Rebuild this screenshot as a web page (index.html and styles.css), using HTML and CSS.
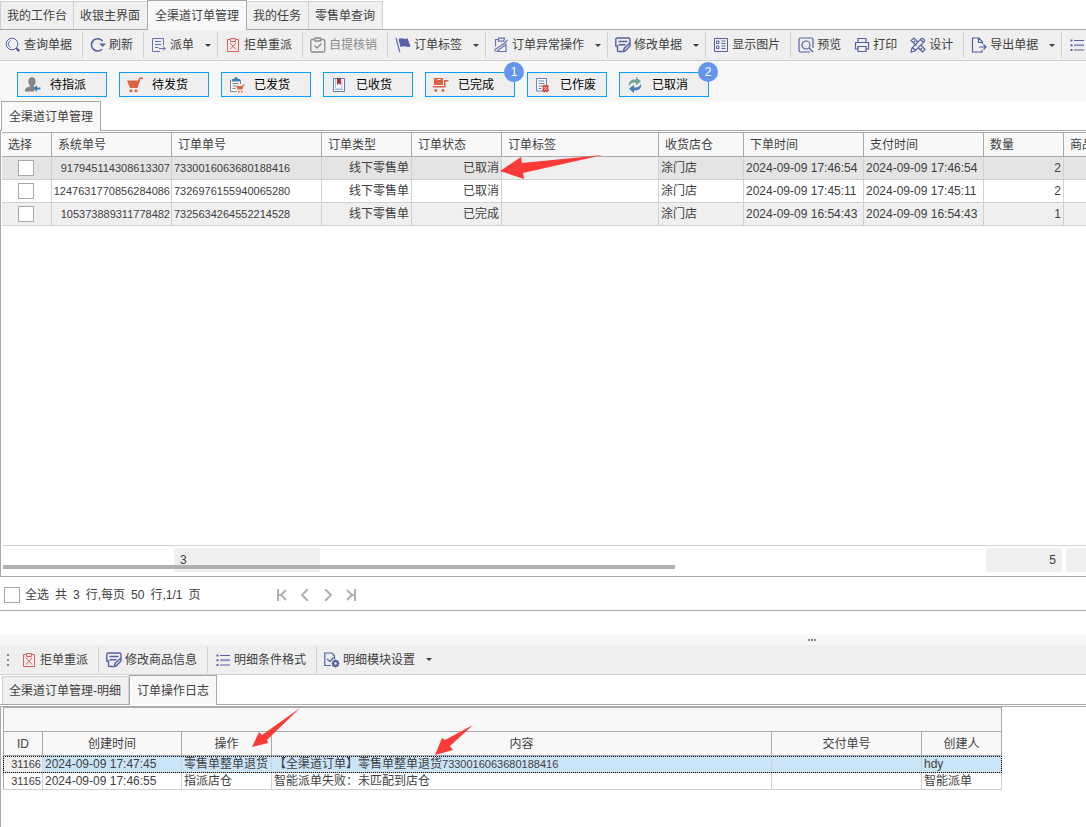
FILE: index.html
```html
<!DOCTYPE html>
<html lang="zh-CN">
<head>
<meta charset="utf-8">
<title>全渠道订单管理</title>
<link rel="stylesheet" href="styles.css">
</head>
<body>
<svg class="sprite" aria-hidden="true">
  <symbol id="i-search" viewBox="0 0 16 16"><g fill="none" stroke="#5b66a8"><circle cx="7" cy="7" r="5.8"/><path d="M5.600 10.500A3.800 3.800 0 0 1 5.600 3.500" stroke-width=".9"/><path d="M11.200 11.200l3 3" stroke-width="2.400"/></g></symbol>
  <symbol id="i-refresh" viewBox="0 0 16 16"><path d="M12.500 4A6.200 6.200 0 1 0 12 12.300" fill="none" stroke="#4c5799" stroke-width="1.500"/><path d="M9 6.500h7L12.800 10z" fill="#5b66a8"/></symbol>
  <symbol id="i-send" viewBox="0 0 16 16"><g fill="none" stroke="#6973b2"><path d="M12.500 8V1.500h-11v13H9"/><path d="M4 4.500h6M4 7.500h6M4 10.500h3.500M8 11.500h6M12 9.500l2.500 2-2.500 2"/></g></symbol>
  <symbol id="i-reject" viewBox="0 0 16 16"><g fill="none" stroke="#dc6258"><path d="M5 2.500H2.500v12h11v-12H11"/><path d="M5.500 1.500h5v3h-5z"/><path d="M5 6l6 6.500M11 6l-6 6.500"/></g></symbol>
  <symbol id="i-verify" viewBox="0 0 16 16"><g fill="none" stroke="#8b8b8b" stroke-width="1.300"><path d="M4.500 2.500H2A1.500 1.500 0 0 0 .8 4v9.500a1.500 1.500 0 0 0 1.500 1.500h11a1.500 1.500 0 0 0 1.500-1.500V4a1.500 1.500 0 0 0-1.500-1.500h-2"/><path d="M5 1h5.500v3H5zM4.500 8.500l2.500 2.500 4.500-4.500"/></g></symbol>
  <symbol id="i-flag" viewBox="0 0 16 16"><path d="M1 .8l3.800 14.400" stroke="#5b66a8" stroke-width="1.200"/><path d="M3.500 2c3.500-2 5.500 1.200 9-.8l3 8.300c-4.500 1.500-5.500-1.500-10 .5z" fill="#5661a3"/></symbol>
  <symbol id="i-abnormal" viewBox="0 0 16 16"><g fill="none" stroke="#6973b2" stroke-width="1.200"><path d="M5 2.500H2.500v7M13 6.500v8H3.500M5.500 1.200h6l-.8 3H5.500zM14.500 3L11 6.500 2 12.500v2M13.500 7l-10 7.500"/></g></symbol>
  <symbol id="i-edit" viewBox="0 0 16 16"><g fill="none" stroke="#5661a3" stroke-width="1.400"><path d="M7 14.500H3.500c-.8 0-1-.5-1-1V9H.8V2.500C.8 1.500 1.300 1 2.200 1h11.300c1 0 1.500.5 1.500 1.500V6M3.500 4.500h9M3.500 7.800h7M8 14.500l1.500-3.500L15 6v3l-5 5z"/></g></symbol>
  <symbol id="i-form" viewBox="0 0 16 16"><g fill="none" stroke="#5661a3"><path d="M1.500 1.500h13v13h-13z"/><path d="M3.500 4h2.500v2.500H3.500zM3.500 9h2.500v2.500H3.500zM8.500 4h4M8.500 6.500h4M8.500 9h4M8.500 11.500h4"/></g></symbol>
  <symbol id="i-preview" viewBox="0 0 16 16"><g fill="none" stroke="#5661a3" stroke-width="1.200"><path d="M15 11V2.500A1.500 1.500 0 0 0 13.500 1h-11A1.500 1.500 0 0 0 1 2.500v11A1.500 1.500 0 0 0 2.500 15H12"/><circle cx="8" cy="8" r="4"/><path d="M11 11l4 4"/></g></symbol>
  <symbol id="i-print" viewBox="0 0 16 16"><g fill="none" stroke="#5661a3" stroke-width="1.200"><path d="M4 5V1.500h8V5M4 12H1.500V5.500h13V12H12M4 9.500h8v5H4z"/></g></symbol>
  <symbol id="i-design" viewBox="0 0 16 16"><g fill="none" stroke="#5661a3" stroke-width="1.200"><path d="M6.500 8.500L1 3.500 4 1l4 4.500M11 8l4 4.500-2.500 2.500L8.500 11M3.500 5.500L5 4M10.500 12.500L12 11"/><path d="M1 15l1-4L11 1.800c1.500-1.500 4.500 1 3.200 2.800L5 14zM2.500 10.500l3 3M10.500 2.500l3 3"/></g></symbol>
  <symbol id="i-export" viewBox="0 0 16 16"><g fill="none" stroke="#5661a3" stroke-width="1.200"><path d="M11.500 7V5L8 1H1.500v14h9.500v-2M7.500 1v4.500h4M8 10h6.500M12.500 7.500L15 10l-2.500 2.500"/></g></symbol>
  <symbol id="i-list" viewBox="0 0 16 16"><path d="M5 3.500h10M5 13h10" stroke="#5661a3" stroke-width="1.200"/><path d="M5 8.200h10" stroke="#8c94c6" stroke-width="2"/><path d="M1.500 2.500h2v2h-2zM1.500 7.200h2v2h-2zM1.500 12h2v2h-2z" fill="#5661a3"/></symbol>
  <symbol id="i-module" viewBox="0 0 16 16"><g fill="none" stroke="#5661a3" stroke-width="1.200"><path d="M7 13.500H.8V1H8L10.500 4V7M3 7l3 2.500L9.500 5.500"/><circle cx="11.500" cy="11.500" r="2.600" stroke-width="1.800"/><path d="M11.500 7.500v8M7.500 11.500h8M8.700 8.700l5.600 5.600M14.300 8.700l-5.600 5.600"/></g><circle cx="11.500" cy="11.500" r="1.200" fill="#efefef"/></symbol>

  <symbol id="s-assign" viewBox="0 0 16 16"><ellipse cx="7" cy="4.600" rx="3.600" ry="4.400" fill="#858585"/><path d="M5 7h4v2.500l1 .5-1 4.500H0c0-3.500 1.500-4.200 5-5z" fill="#858585"/><path d="M8.500 11.500l3.500-3.500v2.500h3.500v2H12V15z" fill="#3a7fbe"/></symbol>
  <symbol id="s-cart" viewBox="0 0 16 16"><path d="M0 3.500h11L12.500.5H16V2h-2.500l-3 9H3z" fill="#dc6243"/><circle cx="4" cy="13.800" r="1.500" fill="#dc6243"/><circle cx="9" cy="13.800" r="1.500" fill="#dc6243"/></symbol>
  <symbol id="s-shipped" viewBox="0 0 16 16"><path d="M2.500 3h9v4M7.500 14.500h-6V3" fill="#fff" stroke="#858585"/><path d="M3 2h2c.3-2.500 3.700-2.500 4 0h2v2.500H3z" fill="#3a7fbe"/><path d="M3.500 6.500h6M3.500 9h4M3.500 11.500h3" stroke="#858585"/><path d="M7.500 9h5.500l.8-1.500H15.500v1h-1l-1.200 4H8.500z" fill="#dc6243"/><path d="M9 14h1.500v1.500H9zM12 14h1.500v1.500H12z" fill="#dc6243"/></symbol>
  <symbol id="s-book" viewBox="0 0 16 16"><path d="M2.500 1.500h11v13h-11z" fill="#fff" stroke="#557fb5"/><path d="M4.500 2v9M11 3v8" stroke="#a6bddb"/><path d="M6 1h4v7L8 6.500 6 8z" fill="#b82c3c"/><path d="M4 11.500h8v1.500H4z" fill="#9eb5d2"/></symbol>
  <symbol id="s-done" viewBox="0 0 16 16"><path d="M1 1h9v7H1zM11 3h4.500v1.500h-3v6H0V9h11z" fill="#dc6243"/><path d="M4.500 2h3v1h-3z" fill="#fff"/><circle cx="2.800" cy="13.500" r="1.400" fill="#dc6243"/><circle cx="10" cy="13.500" r="1.400" fill="#dc6243"/></symbol>
  <symbol id="s-void" viewBox="0 0 16 16"><path d="M1.500 1.500h10V14h-10z" fill="#fff" stroke="#6783b8"/><path d="M3.500 4h6M3.500 6.500h6M3.500 9h4M3.500 11.500h3" stroke="#6783b8"/><path d="M7 9l2-1.500 1.500 1L12 7.500 14 9l-1 2 1 2.500-2 2-1.500-1-1.500 1-2-2 1-2.500z" fill="#d54b3e"/><path d="M9 9.800l3 3.400M12 9.800l-3 3.400" stroke="#f6c5bf"/></symbol>
  <symbol id="s-cancel" viewBox="0 0 16 16"><path d="M1.800 9C1.300 4.500 5 1.800 9 2.800V0l5 4.300-5 4V5.800C6 4.800 4 6 1.800 9z" fill="#6fa592"/><path d="M14.200 7c.5 4.500-3.200 7.200-7.200 6.200V16l-5-4.300 5-4v2.500c3 1 5-.2 7.200-3.200z" fill="#4a7fb8"/></symbol>
</svg>

<nav class="tabs top-tabs" aria-label="页面">
  <button class="tab">我的工作台</button>
  <button class="tab">收银主界面</button>
  <button class="tab active">全渠道订单管理</button>
  <button class="tab">我的任务</button>
  <button class="tab">零售单查询</button>
</nav>

<div class="toolbar" role="toolbar" aria-label="订单操作">
  <button class="tool first"><svg class="icon"><use href="#i-search"/></svg>查询单据</button>
  <button class="tool"><svg class="icon"><use href="#i-refresh"/></svg>刷新</button>
  <button class="tool drop"><svg class="icon"><use href="#i-send"/></svg>派单</button>
  <button class="tool"><svg class="icon"><use href="#i-reject"/></svg>拒单重派</button>
  <button class="tool" disabled><svg class="icon"><use href="#i-verify"/></svg>自提核销</button>
  <button class="tool drop"><svg class="icon"><use href="#i-flag"/></svg>订单标签</button>
  <button class="tool drop"><svg class="icon"><use href="#i-abnormal"/></svg>订单异常操作</button>
  <button class="tool drop"><svg class="icon"><use href="#i-edit"/></svg>修改单据</button>
  <button class="tool"><svg class="icon"><use href="#i-form"/></svg>显示图片</button>
  <button class="tool"><svg class="icon"><use href="#i-preview"/></svg>预览</button>
  <button class="tool joined"><svg class="icon"><use href="#i-print"/></svg>打印</button>
  <button class="tool joined"><svg class="icon"><use href="#i-design"/></svg>设计</button>
  <button class="tool drop"><svg class="icon"><use href="#i-export"/></svg>导出单据</button>
  <button class="tool" aria-label="条件格式"><svg class="icon"><use href="#i-list"/></svg></button>
</div>

<div class="statuses">
  <button class="status"><svg class="icon"><use href="#s-assign"/></svg>待指派</button>
  <button class="status"><svg class="icon"><use href="#s-cart"/></svg>待发货</button>
  <button class="status"><svg class="icon"><use href="#s-shipped"/></svg>已发货</button>
  <button class="status"><svg class="icon"><use href="#s-book"/></svg>已收货</button>
  <button class="status"><svg class="icon"><use href="#s-done"/></svg>已完成<span class="badge">1</span></button>
  <button class="status narrow"><svg class="icon"><use href="#s-void"/></svg>已作废</button>
  <button class="status"><svg class="icon"><use href="#s-cancel"/></svg>已取消<span class="badge">2</span></button>
</div>

<div class="tabs grid-tabs">
  <button class="tab active">全渠道订单管理</button>
</div>

<main class="grid-panel">
  <table class="orders">
    <colgroup><col class="w-check"><col class="w-time"><col class="w-order"><col class="w-type"><col class="w-type"><col class="w-tag"><col class="w-store"><col class="w-time"><col class="w-time"><col class="w-qty"><col class="w-qty"></colgroup>
    <thead>
      <tr><th>选择</th><th>系统单号</th><th>订单单号</th><th>订单类型</th><th>订单状态</th><th>订单标签</th><th>收货店仓</th><th>下单时间</th><th>支付时间</th><th>数量</th><th>商品</th></tr>
    </thead>
    <tbody>
      <tr class="current"><td class="pick"><input type="checkbox" aria-label="选择 917945114308613307"></td><td class="num id">917945114308613307</td><td class="id">7330016063680188416</td><td class="num">线下零售单</td><td class="num">已取消</td><td class="tag"></td><td>涂门店</td><td>2024-09-09 17:46:54</td><td>2024-09-09 17:46:54</td><td class="num">2</td><td></td></tr>
      <tr><td class="pick"><input type="checkbox" aria-label="选择 1247631770856284086"></td><td class="num id">1247631770856284086</td><td class="id">7326976155940065280</td><td class="num">线下零售单</td><td class="num">已取消</td><td></td><td>涂门店</td><td>2024-09-09 17:45:11</td><td>2024-09-09 17:45:11</td><td class="num">2</td><td></td></tr>
      <tr class="odd"><td class="pick"><input type="checkbox" aria-label="选择 105373889311778482"></td><td class="num id">105373889311778482</td><td class="id">7325634264552214528</td><td class="num">线下零售单</td><td class="num">已完成</td><td></td><td>涂门店</td><td>2024-09-09 16:54:43</td><td>2024-09-09 16:54:43</td><td class="num">1</td><td></td></tr>
    </tbody>
  </table>
  <div class="summary">
    <span class="sum count">3</span>
    <span class="sum total">5</span>
    <span class="sum rest"></span>
    <div class="scroll-thumb"></div>
  </div>
  <svg class="pointer pointer-status" viewBox="0 0 104 26" aria-hidden="true"><path d="M0 17L21 3l1 6L103 1 23 19l1 6z"/></svg>
</main>

<div class="pager">
  <label class="pager-all"><input type="checkbox"><span>全选</span></label>
  <span>共</span><span>3</span><span>行,每页</span><span>50</span><span>行,1/1</span><span>页</span>
  <div class="pager-nav">
    <button aria-label="首页"><svg viewBox="0 0 12 12"><path d="M2 0v12M10 1L5 6l5 5M3 6h2"/></svg></button>
    <button aria-label="上一页"><svg viewBox="0 0 12 12"><path d="M9 0L3 6l6 6"/></svg></button>
    <button aria-label="下一页"><svg viewBox="0 0 12 12"><path d="M3 0l6 6-6 6"/></svg></button>
    <button aria-label="末页"><svg viewBox="0 0 12 12"><path d="M10 0v12M2 1l5 5-5 5M9 6H7"/></svg></button>
  </div>
</div>

<section class="detail">
  <div class="splitter"><i></i><i></i><i></i></div>
  <div class="toolbar" role="toolbar" aria-label="明细操作">
    <span class="grip"><i></i><i></i><i></i></span>
    <button class="tool joined"><svg class="icon"><use href="#i-reject"/></svg>拒单重派</button>
    <button class="tool"><svg class="icon"><use href="#i-edit"/></svg>修改商品信息</button>
    <button class="tool"><svg class="icon"><use href="#i-list"/></svg>明细条件格式</button>
    <button class="tool drop"><svg class="icon"><use href="#i-module"/></svg>明细模块设置</button>
  </div>
  <div class="tabs detail-tabs">
    <button class="tab">全渠道订单管理-明细</button>
    <button class="tab active">订单操作日志</button>
  </div>
  <div class="log-panel">
    <table class="log">
      <colgroup><col class="w-id"><col class="w-created"><col class="w-type"><col class="w-content"><col class="w-order"><col class="w-qty"></colgroup>
      <thead>
        <tr><td class="band" colspan="6"></td></tr>
        <tr><th>ID</th><th>创建时间</th><th>操作</th><th>内容</th><th>交付单号</th><th>创建人</th></tr>
      </thead>
      <tbody>
        <tr class="selected"><td class="num id">31166</td><td>2024-09-09 17:47:45</td><td>零售单整单退货</td><td>【全渠道订单】零售单整单退货<span class="id">7330016063680188416</span></td><td></td><td>hdy</td></tr>
        <tr><td class="num id">31165</td><td>2024-09-09 17:46:55</td><td>指派店仓</td><td>智能派单失败：未匹配到店仓</td><td></td><td>智能派单</td></tr>
      </tbody>
    </table>
    <svg class="pointer pointer-action" viewBox="0 0 50 40" aria-hidden="true"><path d="M0 39L7 24l3 3L48 0 15 32l1 3z"/></svg>
    <svg class="pointer pointer-content" viewBox="0 0 40 32" aria-hidden="true"><path d="M0 30L7 13l3 2L38 0 15 21l3 4z"/></svg>
  </div>
</section>
</body>
</html>
```
FILE: styles.css
```css
* { box-sizing: border-box; }

body {
  margin: 0;
  min-height: 100vh;
  display: flex;
  flex-direction: column;
  overflow-x: hidden;
  background: #fff;
  color: #404040;
  font: 12px/16px "Liberation Sans", "Noto Sans CJK SC", sans-serif;
}

button {
  margin: 0;
  padding: 0;
  border: 0;
  background: none;
  color: inherit;
  font: inherit;
  white-space: nowrap;
}

input[type="checkbox"] {
  appearance: none;
  display: block;
  flex: none;
  width: 16px;
  height: 16px;
  margin: 0;
  border: 1px solid #a9a9a9;
  background: #fff;
}

.sprite { position: absolute; width: 0; height: 0; }
.icon { flex: none; width: 16px; height: 16px; }

/* Tabs */
.tabs {
  display: flex;
  flex: none;
  align-items: flex-end;
  height: 30px;
  border-bottom: 1px solid #a9a9a9;
}
.tab {
  height: 28px;
  padding: 0 7px 0 6px;
  border: 1px solid #d0d0d0;
  border-width: 1px 1px 0 0;
  background: #f0f0f0;
}
.tab:first-child { padding: 0 6px; border-left-width: 1px; }
.tab.active {
  height: 30px;
  margin-bottom: -1px;
  padding: 0 7px;
  border-color: #a9a9a9;
  border-left-width: 1px;
  background: #f8f8f8;
}
.top-tabs .active { margin-left: -1px; }
.grid-tabs { padding-left: 1px; }
.detail-tabs { padding-left: 2px; }
.detail-tabs .tab:first-child { padding: 0 7px 0 6px; }

/* Toolbars */
.toolbar {
  display: flex;
  flex: none;
  align-items: center;
  height: 31px;
  border-bottom: 1px solid #d0d0d0;
  background: #efefef;
  overflow: hidden;
}
.tool {
  display: flex;
  flex: none;
  align-items: center;
  gap: 3px;
  height: 26px;
  padding: 0 10px 0 7px;
  border-left: 1px solid #d0d0d0;
}
.tool.first { padding-left: 5px; border-left: 0; }
.tool.joined { padding-left: 3px; border-left: 0; }
.tool:disabled { color: #8b8b8b; }
.tool.drop { padding-right: 6px; }
.tool.drop::after {
  content: "";
  margin-left: 8px;
  border: 3px solid transparent;
  border-top-color: #404040;
  border-bottom-width: 0;
}

/* Status filters */
.statuses {
  display: flex;
  flex: none;
  gap: 12px;
  padding: 11px 0 4px 17px;
  background: #f7f7f7;
}
.status {
  position: relative;
  display: flex;
  align-items: center;
  gap: 9px;
  width: 90px;
  height: 25px;
  padding: 0 7px;
  border: 1px solid #0aa0f5;
  background: #efefef;
  color: #000;
}
.status.narrow { width: 80px; }
.badge {
  position: absolute;
  top: -11px;
  right: -10px;
  width: 20px;
  height: 20px;
  border-radius: 50%;
  background: #6495ed;
  color: #fff;
  line-height: 20px;
  text-align: center;
}

/* Shared table parts */
table {
  table-layout: fixed;
  border-spacing: 0;
}
th, td {
  padding: 0 2px;
  border: 0 solid #d0d0d0;
  border-width: 0 1px 1px 0;
  overflow: hidden;
  white-space: nowrap;
  text-align: left;
}
th, .band {
  border-color: #a9a9a9;
  background: #f8f8f8;
  font-weight: normal;
}
.num { text-align: right; }
.id { font-size: 11px; }
td.num.id { padding: 0 1px; }
.w-check { width: 50px; }
.w-time { width: 120px; }
.w-order { width: 150px; }
.w-type { width: 90px; }
.w-tag { width: 157px; }
.w-store { width: 85px; }
.w-qty { width: 80px; }
.w-id { width: 40px; }
.w-created { width: 139px; }
.w-content { width: 500px; }

/* Orders grid */
.grid-panel {
  position: relative;
  display: flex;
  flex: 1 0 auto;
  flex-direction: column;
  justify-content: space-between;
  align-items: flex-start;
  max-width: 100vw;
  overflow: hidden;
  padding: 1px 0 0 1px;
  border: solid #a9a9a9;
  border-width: 0 0 1px 1px;
}
.orders { width: 1142px; }
.orders th {
  height: 25px;
  padding: 0 6px;
  border-top-width: 1px;
}
.orders td { height: 23px; }
.orders .pick { padding: 0 0 0 16px; }
.orders .odd td { background: #efefef; }
.orders .current td { background: #e4e4e4; }
.orders .current .tag { background: #efefef; }

.summary {
  position: relative;
  display: grid;
  grid-template-columns: 170px 150px 662px 80px 1fr;
  align-items: start;
  width: 1142px;
  height: 31px;
  border-top: 1px solid #d0d0d0;
}
.sum {
  height: 24px;
  margin: 2px;
  padding: 0 6px;
  background: #efefef;
  line-height: 24px;
}
.count { grid-column: 2; }
.total { grid-column: 4; text-align: right; }
.rest { grid-column: 5; }
.scroll-thumb {
  position: absolute;
  left: 1px;
  bottom: 7px;
  width: 672px;
  height: 4px;
  background: #b0b0b0;
}

/* Pager */
.pager {
  display: flex;
  flex: none;
  align-items: center;
  gap: 6px;
  height: 34px;
  padding: 3px 0 0 4px;
  border-bottom: 1px solid #a9a9a9;
}
.pager-all { display: flex; align-items: center; gap: 5px; }
.pager-nav { display: flex; gap: 11px; margin-left: 70px; }
.pager-nav button { width: 12px; height: 16px; }
.pager-nav svg {
  display: block;
  width: 12px;
  height: 12px;
  fill: none;
  stroke: #b0b0b0;
  stroke-width: 2;
}

/* Detail pane */
.detail {
  display: flex;
  flex: 0 0 216px;
  flex-direction: column;
  padding-top: 24px;
}
.detail .toolbar { height: 30px; }
.splitter {
  display: flex;
  flex: none;
  justify-content: center;
  align-items: center;
  gap: 1px;
  height: 10px;
  padding-left: 50%;
  padding-right: 5px;
  background: #f7f7f7;
}
.splitter i, .grip i { width: 2px; height: 2px; background: #8b8b8b; }
.grip {
  display: flex;
  flex-direction: column;
  gap: 3px;
  width: 11px;
  margin-left: 7px;
}
.log-panel {
  position: relative;
  flex: 1;
  margin-top: 1px;
  padding-left: 2px;
  border: solid #a9a9a9;
  border-width: 1px 0 0 1px;
}
.log { width: 999px; }
.log .band { height: 25px; border-top-width: 1px; }
.log .band, .log tr > :first-child { border-left: 1px solid #a9a9a9; }
.log th { height: 24px; text-align: center; }
.log tbody td { height: 17px; line-height: 16px; }
.log .selected td { background: #cce4f7; }
.log .selected td:first-child { background: #efefef; }
.log .selected { outline: 1px dotted #000; outline-offset: -1px; }

/* Red pointers lying over the tables */
.pointer { position: absolute; fill: #fb3b38; pointer-events: none; }
.pointer-status { left: 499px; top: 23px; width: 104px; height: 26px; }
.pointer-action { left: 251px; top: 1px; width: 50px; height: 40px; }
.pointer-content { left: 434px; top: 18px; width: 40px; height: 32px; }
```
